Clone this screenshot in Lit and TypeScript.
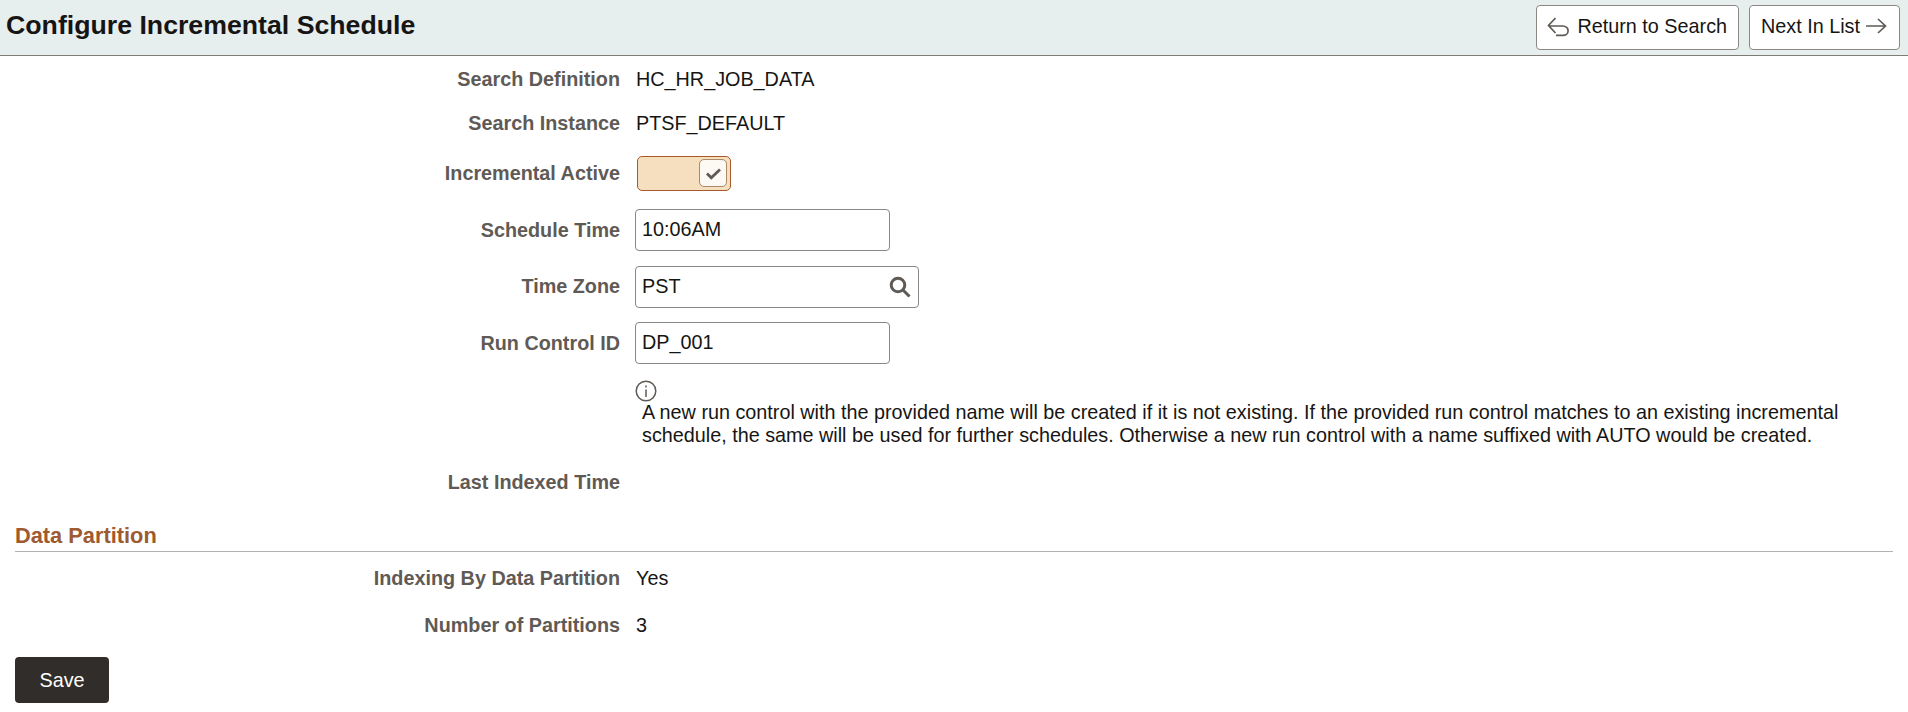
import { LitElement, html, css } from "lit";
import { customElement } from "lit/decorators.js";

@customElement("app-root")
export class AppRoot extends LitElement {
  static styles = css`
    :host { display: block; font-family: "Liberation Sans", Arial, sans-serif; font-size: 19.8px; color: #161513; background: #fff; height: 712px; overflow: hidden; }
    .bar { height: 55px; border-bottom: 1px solid #7f7c78; background: #e7eeee; display: flex; align-items: center; justify-content: space-between; padding: 0 8px 0 6px; }
    h1 { margin: -4px 0 0; font-size: 26.7px; font-weight: 700; color: #161513; }
    .actions { display: flex; gap: 10px; margin-top: -1px; }
    .btn { height: 45px; box-sizing: border-box; background: #fff; border: 1px solid #8b8782; border-radius: 4px; display: flex; align-items: center; gap: 7px; padding: 0 11px 2px; font-size: 19.8px; color: #161513; }
    .btn.next { padding-left: 11px; padding-right: 12px; gap: 6px; }
    .btn.back { padding-left: 10px; gap: 8px; }
    .btn svg { display: block; }
    .rows { display: grid; grid-template-columns: 620px 1fr; column-gap: 16px; align-items: center; }
    .label { text-align: right; font-weight: 700; color: #5f5a55; }
    .cell { display: flex; align-items: center; min-height: 0; }
    .toggle { width: 94px; height: 35px; box-sizing: border-box; margin-left: 1px; background: #f5dfbe; border: 1px solid #a9592b; border-radius: 5px; display: flex; justify-content: flex-end; align-items: center; padding-right: 3px; }
    .knob { width: 28px; height: 28px; box-sizing: border-box; background: #fdf9f3; border: 1px solid #a98a6a; border-radius: 5px; display: flex; align-items: center; justify-content: center; }
    .input { height: 42px; box-sizing: border-box; border: 1px solid #8b8782; border-radius: 4px; display: flex; align-items: center; justify-content: space-between; padding: 0 6px 1px; background: #fff; width: 255px; margin-left: -1px; }
    .input.wide { width: 284px; padding: 0 7px 2px 6px; }
    .input.wide svg { margin-top: 1px; }
    .info { grid-column: 2; line-height: 23px; margin-left: -1px; padding: 10px 0 13px; }
    .info svg { display: block; }
    .info p { margin: -1px 0 0 7px; width: 1230px; color: #161513; }
    .section { margin: 20px 15px 0; height: 26px; border-bottom: 1px solid #b5b3b0; font-size: 21.8px; font-weight: 700; color: #9e5a30; line-height: 22px; }
    .save { margin: 11px 0 0 15px; width: 94px; height: 46px; background: #312d2a; color: #fff; border-radius: 4px; display: flex; align-items: center; justify-content: center; font-size: 19.8px; }
  `;

  private row(label: string, body: unknown, h: number, lift = 0) {
    return html`<div class="label" style="height:${h}px;line-height:${h - lift}px">${label}</div><div class="cell" style="height:${h}px">${body}</div>`;
  }

  render() {
    return html`
      <div class="bar">
        <h1>Configure Incremental Schedule</h1>
        <div class="actions">
          <div class="btn back">
            <svg width="23" height="22" viewBox="0 0 23 22" fill="none" stroke="#5f5a55" stroke-width="1.7"><path d="M8.5 3 1.5 10.5 8.5 18M1.5 11h14.5a5 4.6 0 0 1 0 9.4H9"/></svg>
            <span>Return to Search</span>
          </div>
          <div class="btn next">
            <span>Next In List</span>
            <svg width="21" height="20" viewBox="0 0 21 20" fill="none" stroke="#5f5a55" stroke-width="1.7"><path d="M0 10h19.5M12 3l7.5 7-7.5 7"/></svg>
          </div>
        </div>
      </div>
      <div class="rows">
        ${this.row("Search Definition", html`HC_HR_JOB_DATA`, 46)}
        ${this.row("Search Instance", html`PTSF_DEFAULT`, 42)}
        ${this.row(
          "Incremental Active",
          html`<div class="toggle"><div class="knob"><svg width="17" height="13" viewBox="0 0 17 13" fill="none" stroke="#5f5a55" stroke-width="2.8"><path d="M2 6.5l4.3 4.2L15 2.5"/></svg></div></div>`,
          58,
        )}
        ${this.row("Schedule Time", html`<div class="input">10:06AM</div>`, 56)}
        ${this.row(
          "Time Zone",
          html`<div class="input wide">PST<svg width="22" height="22" viewBox="0 0 22 22" fill="none" stroke="#5f5a55" stroke-width="3"><circle cx="9" cy="9" r="6.8"/><path d="M14 14l6.5 6.5"/></svg></div>`,
          58,
          2,
        )}
        ${this.row("Run Control ID", html`<div class="input">DP_001</div>`, 54)}
        <div></div>
        <div class="info">
          <svg width="22" height="22" viewBox="0 0 22 22" fill="none" stroke="#5f5a55" stroke-width="1.5"><circle cx="11" cy="11" r="9.8"/><path d="M11 9.5v7.5M11 5.5v2"/></svg>
          <p>A new run control with the provided name will be created if it is not existing. If the provided run control matches to an existing incremental schedule, the same will be used for further schedules. Otherwise a new run control with a name suffixed with AUTO would be created.</p>
        </div>
        ${this.row("Last Indexed Time", html``, 45)}
      </div>
      <div class="section">Data Partition</div>
      <div class="rows">
        ${this.row("Indexing By Data Partition", html`Yes`, 52)}
        ${this.row("Number of Partitions", html`3`, 42)}
      </div>
      <div class="save">Save</div>
    `;
  }
}
